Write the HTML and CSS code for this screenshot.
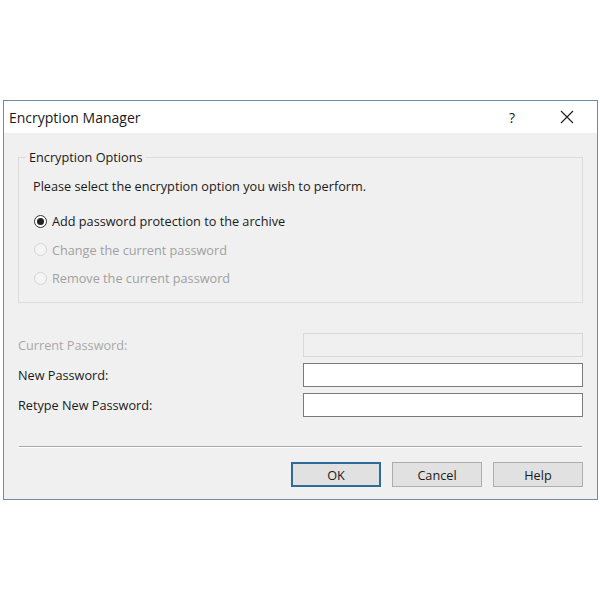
FILE: index.html
```html
<!DOCTYPE html>
<html lang="en">
<head>
  <meta charset="UTF-8">
  <title>Encryption Manager</title>
  <link rel="stylesheet" href="styles.css">
</head>
<body>

  <div class="dialog">
    <div class="titlebar">
      <span class="title">Encryption Manager</span>
      <span class="help-btn">?</span>
      <span class="close-btn">
        <svg width="14" height="14" viewBox="0 0 14 14">
          <path d="M1 1 L13 13 M13 1 L1 13" stroke="#222" stroke-width="1.2" fill="none"/>
        </svg>
      </span>
    </div>

    <div class="content">
      <fieldset class="group">
        <legend>Encryption Options</legend>
        <p class="intro">Please select the encryption option you wish to perform.</p>
        <label class="radio">
          <span class="dot checked"></span>
          Add password protection to the archive
        </label>
        <label class="radio disabled">
          <span class="dot"></span>
          Change the current password
        </label>
        <label class="radio disabled">
          <span class="dot"></span>
          Remove the current password
        </label>
      </fieldset>

      <div class="fields">
        <div class="row">
          <span class="label disabled">Current Password:</span>
          <span class="field off"></span>
        </div>
        <div class="row">
          <span class="label">New Password:</span>
          <span class="field"></span>
        </div>
        <div class="row">
          <span class="label">Retype New Password:</span>
          <span class="field"></span>
        </div>
      </div>

      <hr class="sep">

      <div class="buttons">
        <button class="btn default">OK</button>
        <button class="btn">Cancel</button>
        <button class="btn">Help</button>
      </div>
    </div>
  </div>

</body>
</html>
```

FILE: styles.css
```css
body {
  margin: 0;
  background: #fff;
  font-family: 'Open Sans', sans-serif;
  font-size: 12.7px;
  color: #1a1a1a;
}

.dialog {
  margin: 100px 0 0 3px;
  width: 593px;
  height: 398px;
  border: 1px solid #6e8aa6;
  background: #f0f0f0;
  display: flex;
  flex-direction: column;
}

.titlebar {
  height: 32px;
  background: #fff;
  display: flex;
  align-items: center;
  padding-left: 5px;
}

.title {
  font-size: 14px;
  flex: 1;
}

.help-btn {
  font-size: 14px;
  width: 18px;
  margin-right: 33px;
}

.close-btn {
  display: flex;
  width: 14px;
  margin-right: 23px;
}

.content {
  padding: 0 14px 0 14px;
  display: flex;
  flex-direction: column;
}

.group {
  margin: 15px 0 0 0;
  padding: 0 0 10px 14px;
  height: 155px;
  border: 1px solid #dcdcdc;
  box-sizing: border-box;
}

.group legend {
  padding: 0 3px;
  margin-left: -7px;
}

.intro {
  margin: 11px 0 12px 0;
}

.radio {
  display: flex;
  align-items: center;
  height: 28.5px;
  margin-left: 1px;
}

.radio.disabled {
  color: #a0a0a0;
}

.dot {
  width: 13px;
  height: 13px;
  border-radius: 50%;
  border: 1px solid #333;
  box-sizing: border-box;
  background: #fff;
  margin-right: 5px;
  display: flex;
  align-items: center;
  justify-content: center;
}

.radio.disabled .dot {
  border-color: #d4d4d4;
  background: #f4f4f4;
}

.dot.checked::after {
  content: "";
  width: 7px;
  height: 7px;
  border-radius: 50%;
  background: #222;
}

.fields {
  margin-top: 30px;
  display: flex;
  flex-direction: column;
  gap: 6px;
}

.row {
  display: flex;
  align-items: center;
}

.label {
  flex: 1;
}

.label.disabled {
  color: #a8a8a8;
}

.field {
  width: 280px;
  height: 24px;
  box-sizing: border-box;
  border: 1px solid #7a7a7a;
  background: #fff;
}

.field.off {
  border-color: #d8d8d8;
  background: #f0f0f0;
}

.sep {
  margin: 29px 1px 0 1px;
  border: none;
  border-top: 1px solid #a8a8a8;
  border-bottom: 1px solid #fff;
}

.buttons {
  margin-top: 14px;
  display: flex;
  justify-content: flex-end;
  gap: 11px;
}

.btn {
  width: 90px;
  height: 25px;
  font-family: 'Open Sans', sans-serif;
  font-size: 12.7px;
  color: #1a1a1a;
  background: #e1e1e1;
  border: 1px solid #adadad;
  padding: 0;
}

.btn.default {
  border: 2px solid #2e6b97;
}
```
